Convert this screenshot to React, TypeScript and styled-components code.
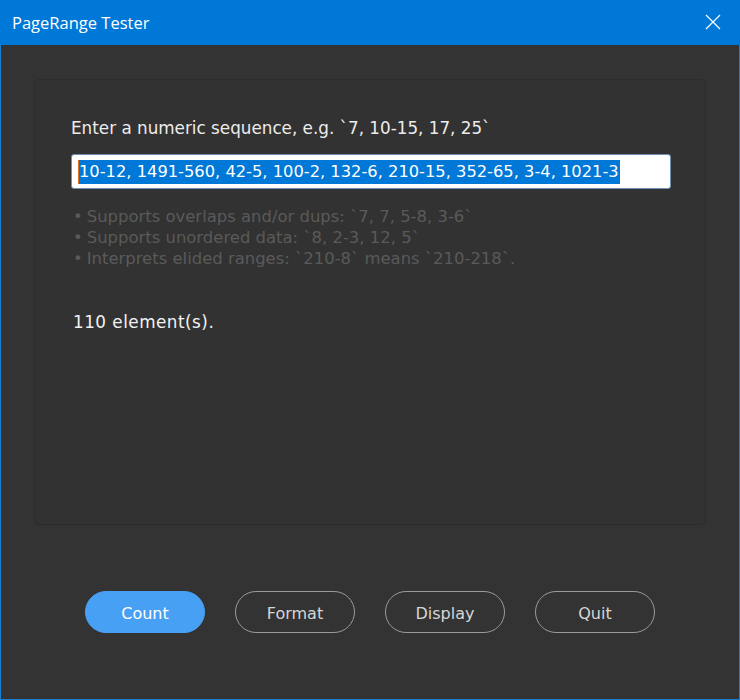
import React from "react";
import styled, { createGlobalStyle } from "styled-components";

const Global = createGlobalStyle`
  html, body { margin: 0; padding: 0; background: #333333; }
  body { font-family: "DejaVu Sans", "Noto Sans", sans-serif; }
  * { box-sizing: border-box; }
`;

const Window = styled.div`
  width: 740px;
  height: 700px;
  display: flex;
  flex-direction: column;
  background: #333333;
  border: 1px solid #1a7fd4;
  border-top: none;
`;

const TitleBar = styled.div`
  height: 45px;
  margin: 0 -1px;
  background: #0078d7;
  display: flex;
  align-items: center;
  justify-content: space-between;
  padding: 0 12px 1px 12px;
  color: #ffffff;
  font-family: "Open Sans", "Noto Sans", sans-serif;
  font-size: 16.5px;
`;

const CloseBtn = styled.div`
  width: 20px;
  height: 20px;
  display: flex;
  align-items: center;
  justify-content: center;
  margin-right: 5px;
`;

const Body = styled.div`
  flex: 1;
  display: flex;
  flex-direction: column;
  padding: 34px 33px 0 33px;
`;

const Panel = styled.div`
  height: 446px;
  border: 1px solid #2c2c2c;
  border-radius: 5px;
  background: #323232;
  padding: 35px 35px 0 36px;
  display: flex;
  flex-direction: column;
`;

const Label = styled.div`
  color: #ececec;
  font-size: 16.8px;
  line-height: 26px;
`;

const InputBox = styled.div`
  margin-top: 13px;
  width: 600px;
  height: 35px;
  background: #ffffff;
  border: 1px solid #6f8fb5;
  border-radius: 3px;
  display: flex;
  align-items: center;
  padding-left: 6px;
`;

const Caret = styled.span`
  width: 1px;
  height: 24px;
  background: #e07020;
`;

const Selected = styled.span`
  background: #0078d7;
  color: #ffffff;
  font-size: 16.3px;
  line-height: 24px;
  white-space: nowrap;
  padding-right: 1px;
`;

const Hints = styled.ul`
  list-style: none;
  margin: 17px 0 0 0;
  padding: 0 0 0 2px;
  color: #5a5a5a;
  font-size: 16.45px;
  line-height: 21px;
`;

const Hint = styled.li`
  &::before {
    content: "•";
    margin-right: 4px;
  }
`;

const Result = styled.div`
  margin-top: 41px;
  padding-left: 2px;
  color: #f2f2f2;
  font-size: 16.8px;
  letter-spacing: 0.5px;
  line-height: 24px;
`;

const ButtonRow = styled.div`
  margin-top: 66px;
  display: flex;
  justify-content: center;
  gap: 30px;
`;

const Button = styled.div<{ $primary?: boolean }>`
  width: 120px;
  height: 42px;
  border-radius: 21px;
  display: flex;
  align-items: center;
  justify-content: center;
  font-size: 16px;
  padding-top: 2px;
  color: ${(p) => (p.$primary ? "#ffffff" : "#d6d6d6")};
  background: ${(p) => (p.$primary ? "#47a0f4" : "transparent")};
  border: 1px solid ${(p) => (p.$primary ? "#47a0f4" : "#9a9a9a")};
`;

export default function App() {
  return (
    <>
      <Global />
      <Window>
        <TitleBar>
          <span>PageRange Tester</span>
          <CloseBtn>
            <svg width="16" height="16" viewBox="0 0 16 16">
              <path d="M1 1 L15 15 M15 1 L1 15" stroke="#ffffff" strokeWidth="1.2" />
            </svg>
          </CloseBtn>
        </TitleBar>
        <Body>
          <Panel>
            <Label>Enter a numeric sequence, e.g. `7, 10-15, 17, 25`</Label>
            <InputBox>
              <Caret />
              <Selected>10-12, 1491-560, 42-5, 100-2, 132-6, 210-15, 352-65, 3-4, 1021-3</Selected>
            </InputBox>
            <Hints>
              <Hint>Supports overlaps and/or dups: `7, 7, 5-8, 3-6`</Hint>
              <Hint>Supports unordered data: `8, 2-3, 12, 5`</Hint>
              <Hint>Interprets elided ranges: `210-8` means `210-218`.</Hint>
            </Hints>
            <Result>110 element(s).</Result>
          </Panel>
          <ButtonRow>
            <Button $primary>Count</Button>
            <Button>Format</Button>
            <Button>Display</Button>
            <Button>Quit</Button>
          </ButtonRow>
        </Body>
      </Window>
    </>
  );
}
